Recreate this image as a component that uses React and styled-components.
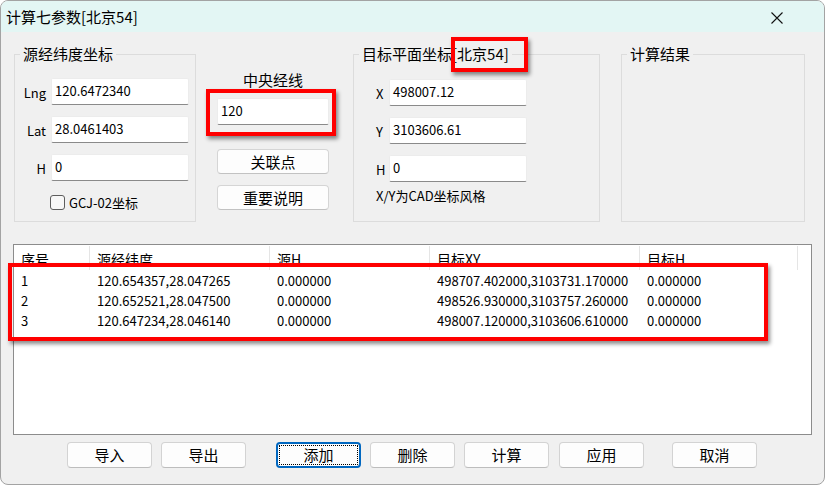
import React from "react";
import styled, { createGlobalStyle } from "styled-components";

const GlobalStyle = createGlobalStyle`
    html, body {
        margin: 0;
        padding: 0;
        background: #fff;
    }
    * { box-sizing: border-box; }
`;

const FONT = `"Noto Sans CJK SC", "Noto Sans", sans-serif`;

const rows = [
    { id: 1, src: "120.654357,28.047265", h: "0.000000", xy: "498707.402000,3103731.170000", th: "0.000000" },
    { id: 2, src: "120.652521,28.047500", h: "0.000000", xy: "498526.930000,3103757.260000", th: "0.000000" },
    { id: 3, src: "120.647234,28.046140", h: "0.000000", xy: "498007.120000,3103606.610000", th: "0.000000" },
];

const columns = [
    { title: "序号", width: 76 },
    { title: "源经纬度", width: 180 },
    { title: "源H", width: 160 },
    { title: "目标XY", width: 210 },
    { title: "目标H", width: 158 },
];

const bottomButtons = [
    { text: "导入", gap: 66 },
    { text: "导出", gap: 9 },
    { text: "添加", gap: 30, focus: true },
    { text: "删除", gap: 9 },
    { text: "计算", gap: 9 },
    { text: "应用", gap: 10 },
    { text: "取消", gap: 28 },
];

const CloseIcon = () => (
    <svg width="12" height="12" viewBox="0 0 12 12">
        <path d="M0.5 0.5 L11.5 11.5 M11.5 0.5 L0.5 11.5" stroke="#111" strokeWidth="1.1" fill="none" />
    </svg>
);

const App = () => {
    return (
        <>
            <GlobalStyle />
            <Ventana>
                <BarraTitulo>
                    <Titulo>计算七参数[北京54]</Titulo>
                    <BotonX><CloseIcon /></BotonX>
                </BarraTitulo>

                <Superior>
                    <Grupo $ancho={182}>
                        <Leyenda>源经纬度坐标</Leyenda>
                        <Formulario $col={31}>
                            <Etiqueta $alinear="right">Lng</Etiqueta>
                            <Campo>120.6472340</Campo>
                            <Etiqueta $alinear="right">Lat</Etiqueta>
                            <Campo>28.0461403</Campo>
                            <Etiqueta $alinear="right">H</Etiqueta>
                            <Campo>0</Campo>
                        </Formulario>
                        <FilaCheck>
                            <Casilla />
                            <span>GCJ-02坐标</span>
                        </FilaCheck>
                    </Grupo>

                    <ColumnaCentro>
                        <TextoCentro>中央经线</TextoCentro>
                        <Campo $ancho={112}>120</Campo>
                        <BotonLateral $mt={24}>关联点</BotonLateral>
                        <BotonLateral $mt={11}>重要说明</BotonLateral>
                    </ColumnaCentro>

                    <Grupo $ancho={247}>
                        <Leyenda>目标平面坐标[北京54]</Leyenda>
                        <Formulario $col={30} $mt={15}>
                            <Etiqueta $alinear="left" $pl={22}>X</Etiqueta>
                            <Campo>498007.12</Campo>
                            <Etiqueta $alinear="left" $pl={22}>Y</Etiqueta>
                            <Campo>3103606.61</Campo>
                            <Etiqueta $alinear="left" $pl={22}>H</Etiqueta>
                            <Campo>0</Campo>
                        </Formulario>
                        <Nota>X/Y为CAD坐标风格</Nota>
                    </Grupo>

                    <Grupo $ancho={184} $ml={21}>
                        <Leyenda>计算结果</Leyenda>
                    </Grupo>
                </Superior>

                <Lista>
                    <Encabezado>
                        {columns.map((c) => (
                            <CeldaTitulo key={c.title} $ancho={c.width}>{c.title}</CeldaTitulo>
                        ))}
                    </Encabezado>
                    {rows.map((r) => (
                        <Fila key={r.id}>
                            <Celda $ancho={columns[0].width}>{r.id}</Celda>
                            <Celda $ancho={columns[1].width}>{r.src}</Celda>
                            <Celda $ancho={columns[2].width}>{r.h}</Celda>
                            <Celda $ancho={columns[3].width}>{r.xy}</Celda>
                            <Celda $ancho={columns[4].width}>{r.th}</Celda>
                        </Fila>
                    ))}
                </Lista>

                <Botonera>
                    {bottomButtons.map((b) => (
                        <Boton key={b.text} $gap={b.gap} $foco={b.focus}>{b.text}</Boton>
                    ))}
                </Botonera>

                <MarcoRojo style={{ left: 205, top: 88, width: 130, height: 47 }} />
                <MarcoRojo style={{ left: 450, top: 36, width: 77, height: 35 }} />
                <MarcoRojo style={{ left: 7, top: 262, width: 760, height: 78 }} />
            </Ventana>
        </>
    );
};

export default App;

const Ventana = styled.div`
    position: relative;
    width: 825px;
    height: 485px;
    background: #f0f0f0;
    border: 1px solid #a3a3a3;
    border-radius: 8px;
    overflow: hidden;
    font-family: ${FONT};
    color: #000;
`;

const BarraTitulo = styled.div`
    height: 31px;
    background: #e3f6f4;
    display: flex;
    align-items: center;
    justify-content: space-between;
    padding: 0 41px 0 5px;
`;

const Titulo = styled.div`
    font-size: 15px;
    line-height: 20px;
    margin-top: 1px;
`;

const BotonX = styled.div`
    display: flex;
    align-items: center;
    margin-top: 2px;
`;

const Superior = styled.div`
    display: flex;
    align-items: flex-start;
    padding: 22px 0 0 13px;
    height: 190px;
`;

const Grupo = styled.div`
    width: ${(p) => p.$ancho}px;
    height: 168px;
    margin-left: ${(p) => p.$ml || 0}px;
    border: 1px solid #dcdcdc;
    flex-shrink: 0;
`;

const Leyenda = styled.div`
    width: fit-content;
    height: 20px;
    margin: -11px 0 0 5px;
    padding: 0 3px;
    background: #f0f0f0;
    font-size: 15px;
    line-height: 20px;
`;

const Formulario = styled.div`
    display: grid;
    grid-template-columns: ${(p) => p.$col}px 138px;
    column-gap: 5px;
    row-gap: 11px;
    margin-top: ${(p) => p.$mt || 14}px;
`;

const Etiqueta = styled.div`
    height: 27px;
    line-height: 27px;
    padding-top: 1px;
    padding-left: ${(p) => p.$pl || 0}px;
    font-size: 13px;
    text-align: ${(p) => p.$alinear};
`;

const Campo = styled.div`
    width: ${(p) => (p.$ancho ? `${p.$ancho}px` : "auto")};
    height: 27px;
    background: #fff;
    border: 1px solid #ececec;
    border-bottom: 1px solid #8a8a8a;
    border-radius: 2px;
    padding: 2px 0 0 3px;
    font-size: 13px;
    line-height: 20px;
    white-space: nowrap;
`;

const FilaCheck = styled.div`
    display: flex;
    align-items: center;
    gap: 4px;
    margin: 13px 0 0 35px;
    font-size: 13px;
    line-height: 17px;
`;

const Casilla = styled.div`
    width: 15px;
    height: 15px;
    border: 1px solid #5d5d5d;
    border-radius: 3px;
    background: #f7f7f7;
`;

const ColumnaCentro = styled.div`
    width: 112px;
    margin: 16px 24px 0 21px;
    display: flex;
    flex-direction: column;
    flex-shrink: 0;
`;

const TextoCentro = styled.div`
    font-size: 15px;
    line-height: 20px;
    text-align: center;
    margin-bottom: 8px;
`;

const BotonLateral = styled.div`
    height: 25px;
    margin-top: ${(p) => p.$mt}px;
    background: #fdfdfd;
    border: 1px solid #d5d5d5;
    border-bottom-color: #c2c2c2;
    border-radius: 4px;
    font-size: 15px;
    line-height: 23px;
    text-align: center;
`;

const Nota = styled.div`
    margin: 5px 0 0 22px;
    font-size: 13px;
    line-height: 18px;
`;

const Lista = styled.div`
    margin: 22px 0 0 12px;
    width: 799px;
    height: 191px;
    background: #fff;
    border: 1px solid #8c8c8c;
`;

const Encabezado = styled.div`
    display: flex;
    height: 25px;
    padding-top: 1px;
`;

const CeldaTitulo = styled.div`
    width: ${(p) => p.$ancho}px;
    flex-shrink: 0;
    border-right: 1px solid #e5e5e5;
    padding: 3px 0 0 7px;
    font-size: 14px;
    line-height: 20px;
`;

const Fila = styled.div`
    display: flex;
    height: 20px;
    align-items: center;
`;

const Celda = styled.div`
    width: ${(p) => p.$ancho}px;
    flex-shrink: 0;
    padding-left: 7px;
    font-size: 13px;
    line-height: 20px;
    padding-top: 1px;
    white-space: nowrap;
`;

const Botonera = styled.div`
    display: flex;
    margin-top: 7px;
`;

const Boton = styled.div`
    width: 85px;
    height: 26px;
    margin-left: ${(p) => p.$gap}px;
    background: #fdfdfd;
    border: ${(p) => (p.$foco ? "2px solid #0067c0" : "1px solid #d3d3d3")};
    border-bottom-color: ${(p) => (p.$foco ? "#0067c0" : "#bdbdbd")};
    border-radius: 4px;
    outline: ${(p) => (p.$foco ? "1px dotted #000" : "none")};
    outline-offset: -4px;
    font-size: 15px;
    line-height: ${(p) => (p.$foco ? 22 : 24)}px;
    text-align: center;
`;

const MarcoRojo = styled.div`
    position: absolute;
    border: 4px solid #ff0000;
    box-shadow: 2px 3px 4px rgba(0, 0, 0, 0.45);
    pointer-events: none;
`;
